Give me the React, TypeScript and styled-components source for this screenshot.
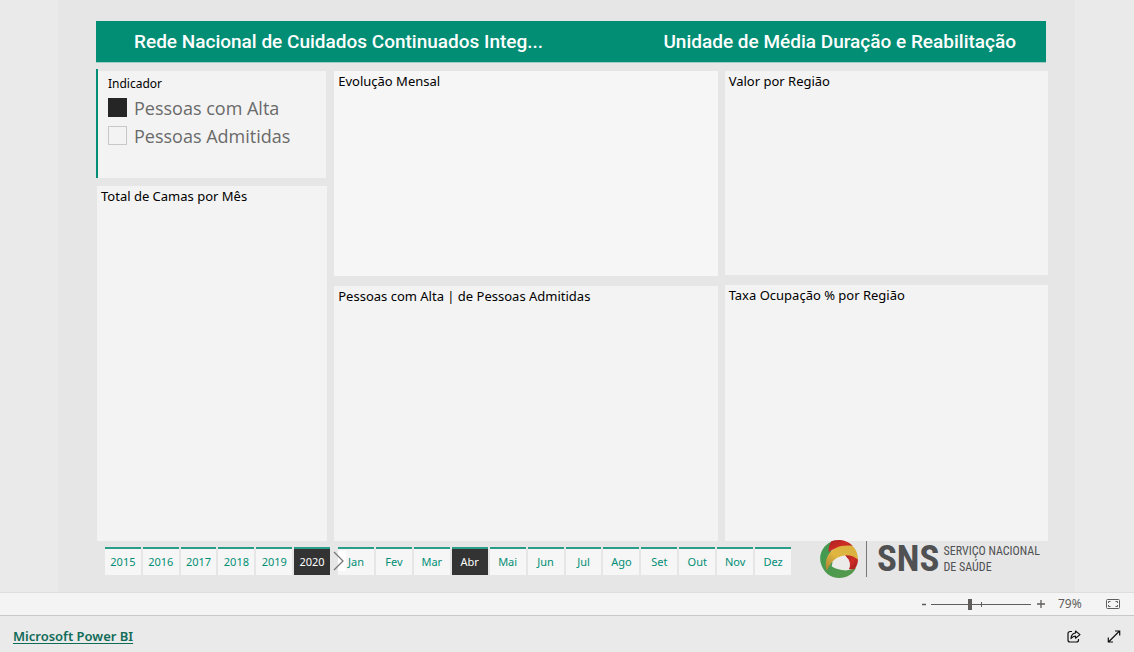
import React, { useState } from "react";
import styled, { createGlobalStyle } from "styled-components";

const GlobalStyle = createGlobalStyle`
  * { box-sizing: border-box; }
  body {
    margin: 0;
    background: #eaeaea;
    color: #000;
    font-family: "Noto Sans", "Open Sans", sans-serif;
    font-size: 13px;
  }
  button, input { font: inherit; }
`;

const Page = styled.div`
  display: flex;
  flex-direction: column;
  min-height: 100vh;
`;

const Report = styled.main`
  flex: 1;
  display: flex;
  flex-direction: column;
  margin: 0 59px 0 58px;
  padding: 21px 27px 14px 38px;
  background: #e6e6e6;
`;

const Banner = styled.header`
  display: flex;
  justify-content: space-between;
  align-items: center;
  height: 42px;
  margin-right: 2px;
  padding: 0 30px 0 38px;
  background: #018e75;
  border-bottom: 1px solid #a3cdc4;
  color: #fff;
`;

const BannerTitle = styled.h1`
  margin: 0;
  font: 500 19px/40px Roboto, sans-serif;
  white-space: nowrap;
`;

const Panels = styled.div`
  flex: 1;
  display: grid;
  grid-template-columns: 231fr 383fr 323fr;
  gap: 7px;
  margin-top: 7px;
`;

const Column = styled.div<{ $gap: number }>`
  display: flex;
  flex-direction: column;
  gap: ${(p) => p.$gap}px;
  padding-top: 1px;
`;

const Panel = styled.section<{ $grow: number; $bright?: boolean }>`
  flex: ${(p) => p.$grow} 1 0;
  padding: 0 4px;
  background: ${(p) => (p.$bright ? "#f6f6f6" : "#f3f3f3")};
`;

const TotalPanel = styled(Panel)`
  margin-left: 1px;
`;

const PanelTitle = styled.h2`
  margin: 0;
  font-size: 13px;
  font-weight: 400;
  line-height: 21px;
`;

const Slicer = styled.fieldset`
  height: 109px;
  min-width: 0;
  margin: -2px 1px 0 0;
  padding: 6px 10px 0;
  border: 0;
  border-left: 2px solid #018e75;
  background: linear-gradient(#e6e6e6 2px, #f3f3f3 2px);
`;

const SlicerTitle = styled.legend`
  float: left;
  width: 100%;
  padding: 0;
  font-size: 12px;
  line-height: 18px;
`;

const Option = styled.label`
  display: flex;
  align-items: center;
  gap: 7px;
  clear: both;
  height: 28px;
  color: #6a6a6a;
  font-family: "Open Sans", sans-serif;
  font-size: 18px;
  line-height: 28px;
  white-space: nowrap;
`;

const OptionText = styled.span`
  padding-top: 1px;
`;

const OptionBox = styled.input`
  appearance: none;
  width: 19px;
  height: 19px;
  margin: 0;
  border: 1px solid #cbc6c8;
  background: #f3f3f3;
  &:checked {
    border-color: #252525;
    background: #252525;
  }
`;

const BottomRow = styled.div`
  display: grid;
  grid-template-columns: minmax(0, 686fr) minmax(0, 257fr);
  align-items: start;
  height: 37px;
  padding-left: 9px;
`;

const Periods = styled.div`
  display: grid;
  grid-template-columns: 225fr 453fr;
  gap: 8px;
  padding-top: 6px;
`;

const Tabs = styled.div`
  position: relative;
  display: flex;
  gap: 2px;
`;

const Tab = styled.button<{ $active: boolean }>`
  flex: 1 1 0;
  min-width: 0;
  height: 28px;
  padding: 0 0 2px;
  border: 0;
  border-top: 2px solid #2a9d88;
  background: ${(p) => (p.$active ? "#333" : "#f6f6f6")};
  color: ${(p) => (p.$active ? "#fff" : "#018e75")};
  font-size: 11px;
`;

const NextButton = styled.button`
  position: absolute;
  left: 100%;
  top: 4px;
  width: 14px;
  height: 20px;
  z-index: 1;
  margin-left: 2px;
  padding: 0;
  border: 0;
  background: linear-gradient(90deg, transparent 6px, #fff 6px);
  svg { display: block; }
`;

const Brand = styled.div`
  display: flex;
  align-items: center;
  justify-content: flex-end;
  height: 36px;
  padding-right: 8px;
  color: #505153;
  font-family: "Roboto Condensed", Roboto, sans-serif;
`;

const BrandRule = styled.div`
  width: 1px;
  height: 36px;
  margin: 0 10px 0 8px;
  background: #77787a;
`;

const BrandShort = styled.strong`
  font-size: 37px;
  line-height: 36px;
`;

const BrandLong = styled.span`
  margin-left: 4px;
  font-size: 12px;
  line-height: 16px;
  white-space: nowrap;
`;

const ZoomBar = styled.div`
  display: flex;
  align-items: center;
  justify-content: flex-end;
  height: 24px;
  padding-right: 14px;
  border-top: 1px solid #dedede;
  border-bottom: 1px solid #c8c8c8;
  background: #f4f4f4;
  color: #605e5c;
`;

const ZoomButton = styled.button`
  display: flex;
  padding: 0;
  border: 0;
  background: none;
  color: inherit;
`;

const SliderWrap = styled.div`
  display: flex;
  width: 100px;
  height: 12px;
  margin: 0 6px 0 3px;
  background:
    linear-gradient(#605e5c, #605e5c) 50px 4px / 1px 5px no-repeat,
    linear-gradient(#605e5c, #605e5c) 0 6px / 100% 1px no-repeat;
`;

const Slider = styled.input`
  appearance: none;
  width: 100%;
  height: 12px;
  margin: 0;
  background: transparent;
  &::-webkit-slider-thumb {
    appearance: none;
    width: 4px;
    height: 11px;
    background: #605e5c;
  }
`;

const ZoomValue = styled.output`
  width: 61px;
  padding-left: 13px;
  font-size: 12px;
  line-height: 22px;
`;

const Footer = styled.footer`
  display: flex;
  align-items: center;
  justify-content: space-between;
  height: 36px;
  padding: 4px 13px 0;
`;

const FooterLink = styled.a`
  color: #106b58;
  font-size: 13px;
  font-weight: 600;
  text-underline-offset: 2px;
`;

const FooterActions = styled.div`
  display: flex;
  gap: 26px;
`;

const IconButton = styled.button`
  display: flex;
  padding: 0;
  border: 0;
  background: none;
  color: #111;
`;

const YEARS = ["2015", "2016", "2017", "2018", "2019", "2020"];
const MONTHS = ["Jan", "Fev", "Mar", "Abr", "Mai", "Jun", "Jul", "Ago", "Set", "Out", "Nov", "Dez"];
const INDICATORS = ["Pessoas com Alta", "Pessoas Admitidas"];

const Emblem = () => (
  <svg width="38" height="38" viewBox="0 0 114 114" aria-hidden="true">
    <defs>
      <linearGradient id="gold" x1="0" y1="1" x2="1" y2="0">
        <stop offset="0" stopColor="#a98232" />
        <stop offset=".45" stopColor="#e0b640" />
        <stop offset="1" stopColor="#d8b040" />
      </linearGradient>
      <linearGradient id="red" x1="0" y1="0" x2="1" y2="1">
        <stop offset="0" stopColor="#a81f22" />
        <stop offset=".5" stopColor="#cf2c25" />
        <stop offset="1" stopColor="#9c1c1a" />
      </linearGradient>
      <linearGradient id="green" x1="0" y1="0" x2="1" y2="1">
        <stop offset="0" stopColor="#3f9a52" />
        <stop offset="1" stopColor="#58994c" />
      </linearGradient>
    </defs>
    <circle cx="57" cy="57" r="42" fill="#ecebea" />
    <path d="M34 5C8 16-4 44 2 68c7 28 29 46 56 46 23 0 40-11 50-30-14 6-30 9-46 4C44 82 36 70 34 56z" fill="url(#green)" />
    <path d="M34 4C54-4 82 0 98 18L84 30C62 20 46 24 26 36 25 24 28 12 34 4z" fill="url(#red)" />
    <path d="M72 42c20 0 36 6 42 15 0 11-3 22-10 30-7 2-12 2-18 0 8-12 2-28-14-45z" fill="url(#red)" />
    <path d="M20 92C12 66 20 40 44 26 62 15 82 16 97 17c11 10 17 24 17 42-14-12-32-16-48-11C44 54 32 68 20 92z" fill="url(#gold)" />
    <path d="M35 79c2-16 13-27 27-29 9-1 18 2 23 8 5 8 6 20 1 31-18 4-37 0-51-10z" fill="#ecebea" />
  </svg>
);

export default function App() {
  const [indicator, setIndicator] = useState(INDICATORS[0]);
  const [year, setYear] = useState("2020");
  const [month, setMonth] = useState("Abr");
  const [zoom, setZoom] = useState(79);

  return (
    <>
      <GlobalStyle />
      <Page>
        <Report>
          <Banner>
            <BannerTitle>Rede Nacional de Cuidados Continuados Integ...</BannerTitle>
            <BannerTitle as="h2">Unidade de Média Duração e Reabilitação</BannerTitle>
          </Banner>
          <Panels>
            <Column $gap={8}>
              <Slicer>
                <SlicerTitle>Indicador</SlicerTitle>
                {INDICATORS.map((name) => (
                  <Option key={name}>
                    <OptionBox
                      type="checkbox"
                      checked={indicator === name}
                      onChange={() => setIndicator(name)}
                    />
                    <OptionText>{name}</OptionText>
                  </Option>
                ))}
              </Slicer>
              <TotalPanel $grow={1}><PanelTitle>Total de Camas por Mês</PanelTitle></TotalPanel>
            </Column>
            <Column $gap={10}>
              <Panel $grow={205} $bright><PanelTitle>Evolução Mensal</PanelTitle></Panel>
              <Panel $grow={256}><PanelTitle>Pessoas com Alta | de Pessoas Admitidas</PanelTitle></Panel>
            </Column>
            <Column $gap={10}>
              <Panel $grow={204}><PanelTitle>Valor por Região</PanelTitle></Panel>
              <Panel $grow={257}><PanelTitle>Taxa Ocupação % por Região</PanelTitle></Panel>
            </Column>
          </Panels>
          <BottomRow>
            <Periods>
              <Tabs>
                {YEARS.map((y) => (
                  <Tab key={y} $active={y === year} onClick={() => setYear(y)}>{y}</Tab>
                ))}
                <NextButton aria-label="Seguinte">
                  <svg width="14" height="20" viewBox="0 0 14 20" fill="none" stroke="#777" strokeWidth="1.3">
                    <path d="M2 1l9 9-9 9" />
                  </svg>
                </NextButton>
              </Tabs>
              <Tabs>
                {MONTHS.map((m) => (
                  <Tab key={m} $active={m === month} onClick={() => setMonth(m)}>{m}</Tab>
                ))}
              </Tabs>
            </Periods>
            <Brand>
              <Emblem />
              <BrandRule />
              <BrandShort>SNS</BrandShort>
              <BrandLong>SERVIÇO NACIONAL<br />DE SAÚDE</BrandLong>
            </Brand>
          </BottomRow>
        </Report>
        <ZoomBar>
          <ZoomButton aria-label="Reduzir" onClick={() => setZoom(Math.max(10, zoom - 10))}>
            <svg width="7" height="8" viewBox="0 0 7 8"><path d="M1 4.500h4" stroke="currentColor" strokeWidth="1.500" /></svg>
          </ZoomButton>
          <SliderWrap>
            <Slider
              type="range"
              aria-label="Zoom"
              min="0"
              max="205"
              value={zoom}
              onChange={(e) => setZoom(Number(e.target.value))}
            />
          </SliderWrap>
          <ZoomButton aria-label="Ampliar" onClick={() => setZoom(Math.min(205, zoom + 10))}>
            <svg width="8" height="8" viewBox="0 0 8 8"><path d="M0 4h8M4 0v8" stroke="currentColor" strokeWidth="1.300" /></svg>
          </ZoomButton>
          <ZoomValue>{zoom}%</ZoomValue>
          <ZoomButton aria-label="Ajustar à página">
            <svg width="14" height="10" viewBox="0 0 14 10" fill="none" stroke="currentColor">
              <rect x=".5" y=".5" width="13" height="9" rx="1" />
              <path d="M4.500 2.500h-2v1.500M2.500 6v1.500h2M9.500 2.500h2v1.500M11.500 6v1.500h-2" />
            </svg>
          </ZoomButton>
        </ZoomBar>
        <Footer>
          <FooterLink href="#">Microsoft Power BI</FooterLink>
          <FooterActions>
            <IconButton aria-label="Partilhar">
              <svg width="14" height="13" viewBox="0 0 14 13" fill="none" stroke="currentColor" strokeWidth="1.200" strokeLinejoin="round">
                <path d="M5 1.500H3a2 2 0 0 0-2 2V10a2 2 0 0 0 2 2h6.500a2 2 0 0 0 2-2V9" />
                <path d="M8.500 1l4.500 3.600-4.500 3.600V6.200C6.500 6.200 5.200 7 4 8.500 4.200 5.500 5.500 3.300 8.500 3z" />
              </svg>
            </IconButton>
            <IconButton aria-label="Ecrã inteiro">
              <svg width="14" height="13" viewBox="0 0 14 13" fill="none" stroke="currentColor" strokeWidth="1.200">
                <path d="M1.500 12L12.500 1M8 1h4.700v4.500M1.300 7.500V12H6" />
              </svg>
            </IconButton>
          </FooterActions>
        </Footer>
      </Page>
    </>
  );
}
